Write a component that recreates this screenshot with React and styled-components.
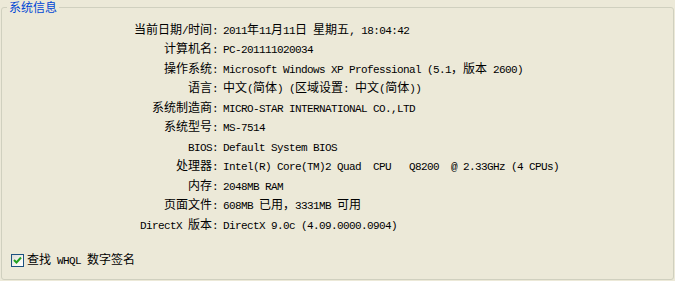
import React from 'react'
import styled, { createGlobalStyle } from 'styled-components'

const GlobalStyle = createGlobalStyle`
	html, body {
		margin: 0;
		padding: 0;
		background: #ece9d8;
	}
	body {
		font-family: 'Noto Sans CJK SC', 'Liberation Sans', sans-serif;
		font-size: 12px;
		color: #000;
	}
`

const Page = styled.div`
	width: 675px;
	height: 281px;
	box-sizing: border-box;
	padding: 0 1px 0 1px;
`

const Group = styled.fieldset`
	margin: 0;
	padding: 0;
	height: 280px;
	box-sizing: border-box;
	border: 1px solid #d0d0bf;
	border-radius: 3px;
	display: flex;
	flex-direction: column;
`

const Legend = styled.legend`
	margin-left: 5px;
	padding: 0 2px;
	color: #0046d5;
	font-size: 12px;
	line-height: 14px;
	height: 14px;
`

const InfoGrid = styled.div`
	display: grid;
	grid-template-columns: 216px 1fr;
	column-gap: 5px;
	grid-auto-rows: 19.5px;
	align-items: center;
	padding-top: 6px;
	line-height: 19.5px;
`

const Label = styled.div`
	text-align: right;
	white-space: pre;
`

const Value = styled.div`
	white-space: pre;
`

const Lat = styled.span`
	font-family: 'Liberation Mono', 'DejaVu Sans Mono', monospace;
	font-size: 11px;
	letter-spacing: -0.6px;
	white-space: pre;
`

const Footer = styled.label`
	margin-top: auto;
	margin-bottom: 11px;
	margin-left: 9px;
	display: flex;
	align-items: center;
	gap: 3px;
	line-height: 13px;
`

const Box = styled.span`
	width: 11px;
	height: 11px;
	border: 1px solid #1c5180;
	background: linear-gradient(135deg, #dcdcd7 0%, #f5f5f1 60%, #fff 100%);
	display: flex;
	align-items: center;
	justify-content: center;
`

// split a string so runs of ascii go in the narrow fixed-width face
const mix = str =>
	str.split(/([\x20-\x7e]+)/).map((part, i) =>
		/^[\x20-\x7e]+$/.test(part) ? <Lat key={i}>{part}</Lat> : part
	)

const rows = [
	['当前日期/时间', '2011年11月11日 星期五, 18:04:42'],
	['计算机名', 'PC-201111020034'],
	['操作系统', 'Microsoft Windows XP Professional (5.1，版本 2600)'],
	['语言', '中文(简体) (区域设置: 中文(简体))'],
	['系统制造商', 'MICRO-STAR INTERNATIONAL CO.,LTD'],
	['系统型号', 'MS-7514'],
	['BIOS', 'Default System BIOS'],
	['处理器', 'Intel(R) Core(TM)2 Quad  CPU   Q8200  @ 2.33GHz (4 CPUs)'],
	['内存', '2048MB RAM'],
	['页面文件', '608MB 已用，3331MB 可用'],
	['DirectX 版本', 'DirectX 9.0c (4.09.0000.0904)'],
]

const App = () => (
	<Page>
		<GlobalStyle />
		<Group>
			<Legend>系统信息</Legend>
			<InfoGrid>
				{rows.map(([label, value]) => (
					<React.Fragment key={label}>
						<Label>{mix(label + ':')}</Label>
						<Value>{mix(value)}</Value>
					</React.Fragment>
				))}
			</InfoGrid>
			<Footer>
				<Box>
					<svg width="9" height="9" viewBox="0 0 9 9">
						<path
							d="M1 4 L3.5 6.5 L8 1.5"
							fill="none"
							stroke="#21a121"
							strokeWidth="2"
						/>
					</svg>
				</Box>
				<span>{mix('查找 WHQL 数字签名')}</span>
			</Footer>
		</Group>
	</Page>
)

export default App
